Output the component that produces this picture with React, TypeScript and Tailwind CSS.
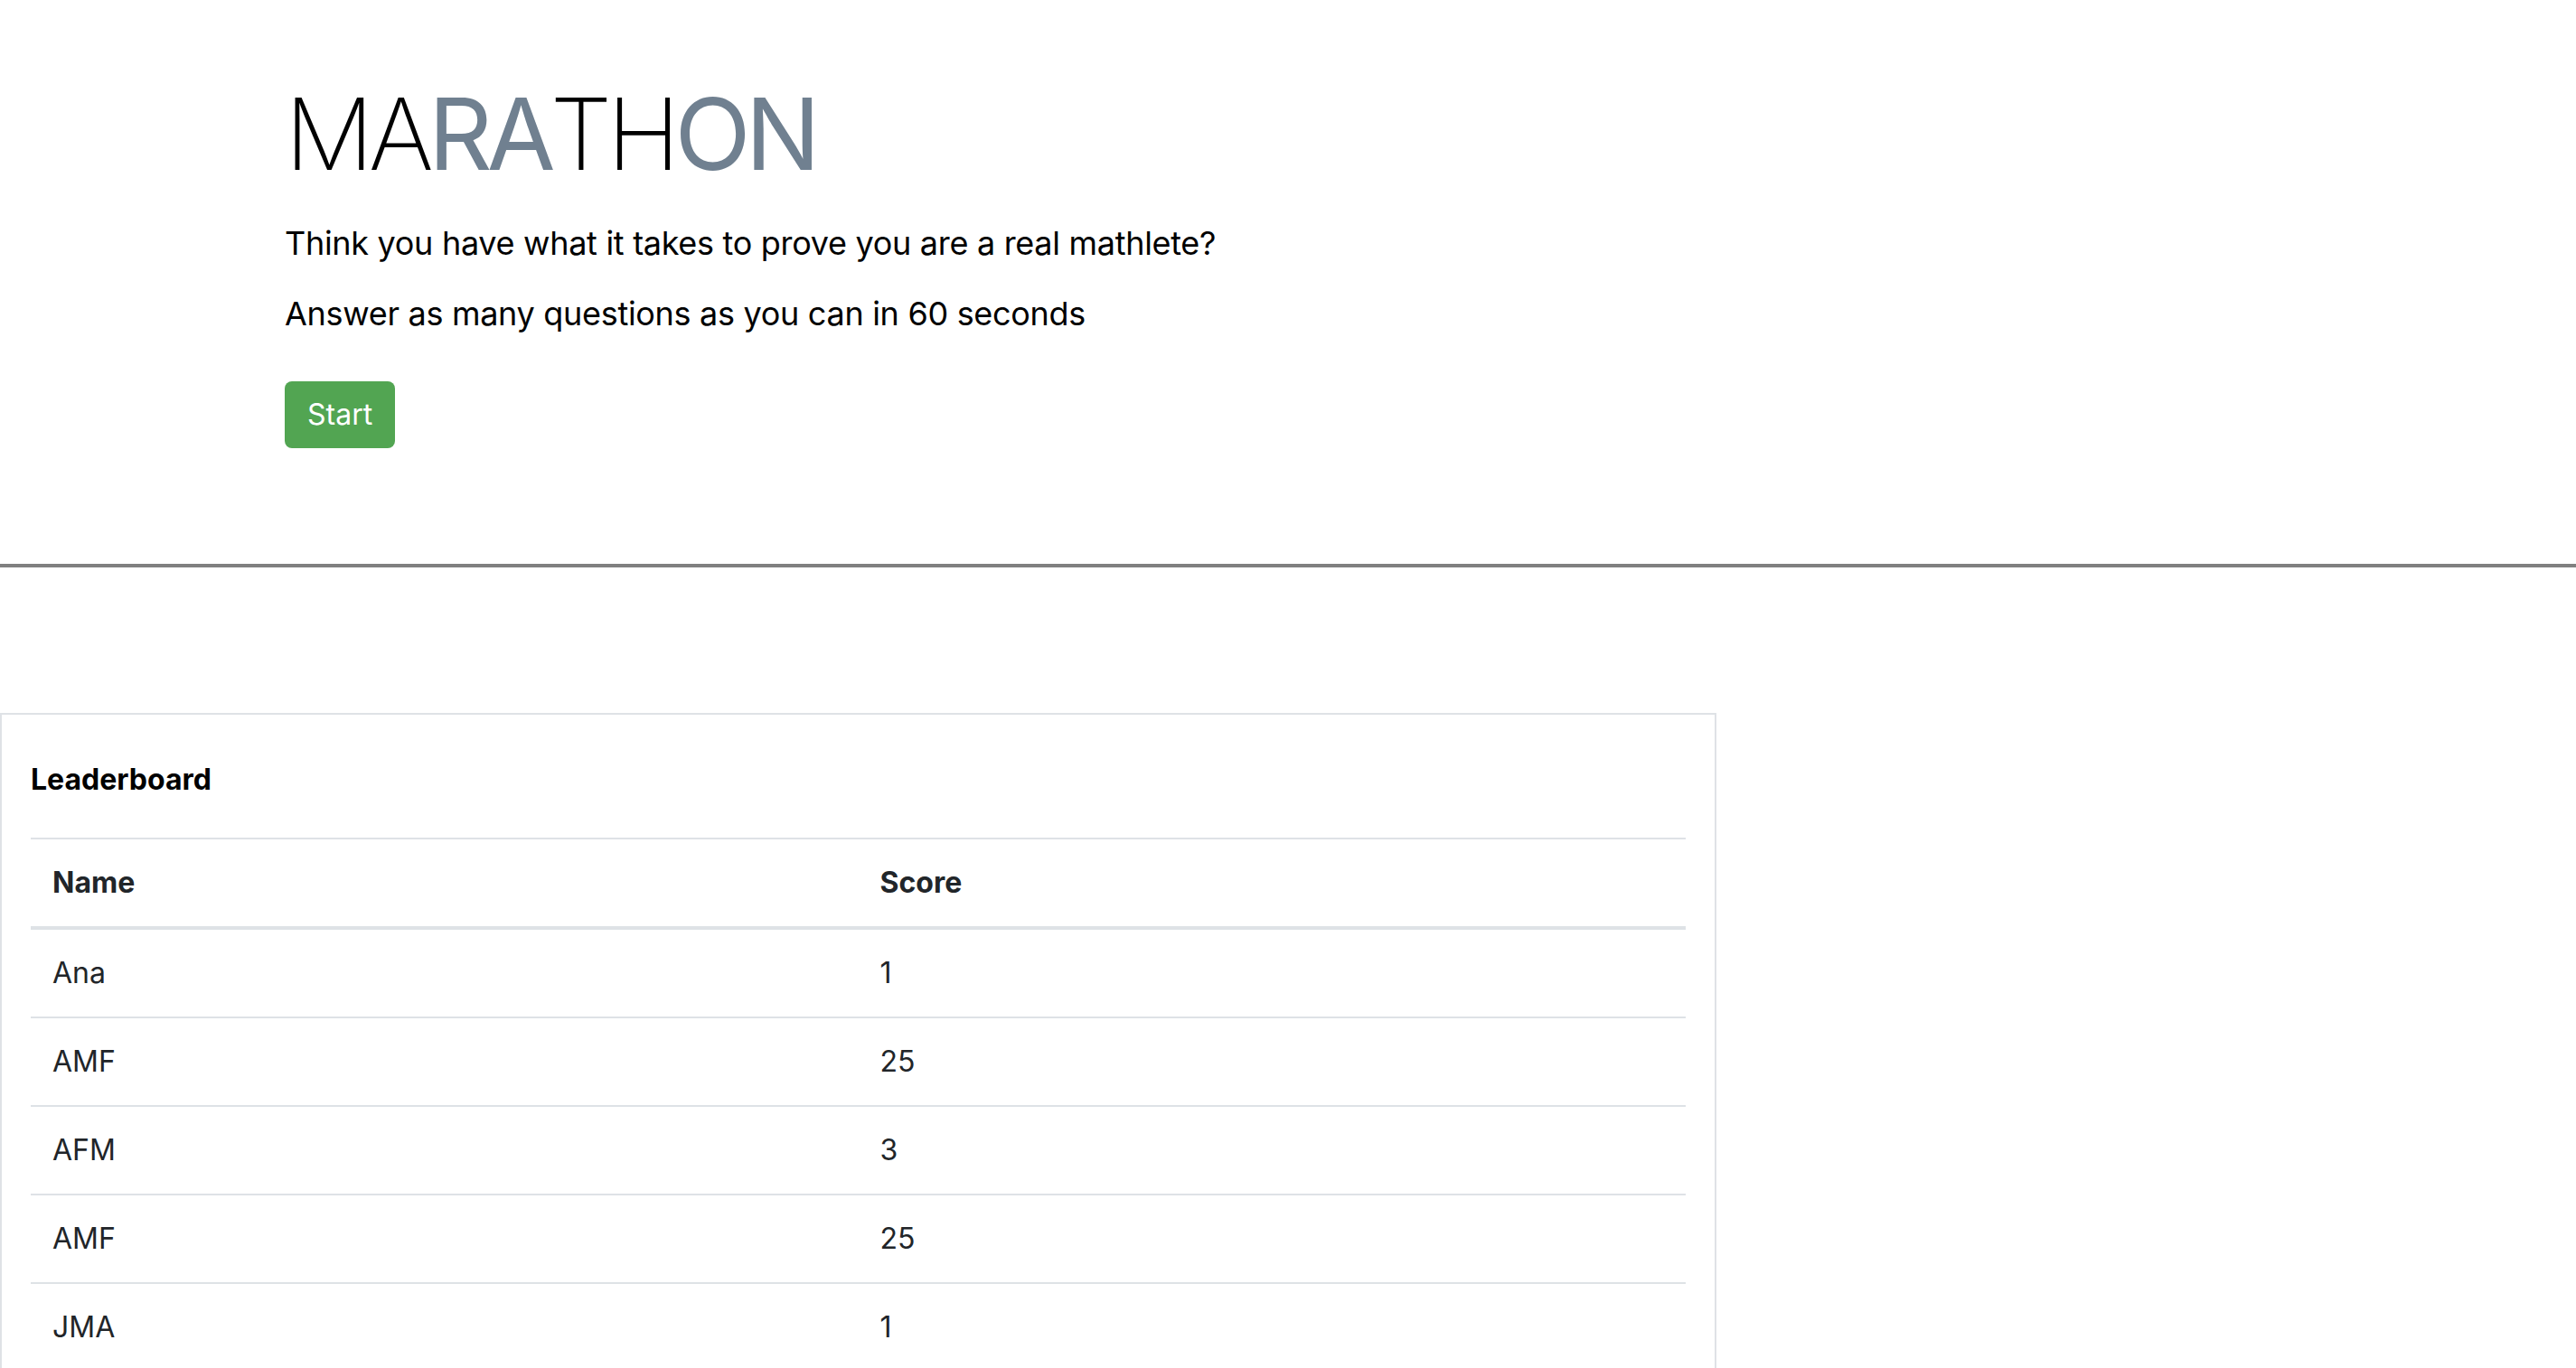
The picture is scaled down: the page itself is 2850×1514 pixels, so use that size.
import React from 'react';

const scores = [
  { name: 'Ana', score: 1 },
  { name: 'AMF', score: 25 },
  { name: 'AFM', score: 3 },
  { name: 'AMF', score: 25 },
  { name: 'JMA', score: 1 },
];

export default function App() {
  return (
    <div className="min-h-screen bg-white text-black" style={{ fontFamily: 'Inter, "Noto Sans", sans-serif' }}>
      <div className="pl-[315px] pt-[82px] pb-[128px]">
        <h1 className="text-[110px] leading-[1.2] tracking-[-6px] font-extralight">
          MA<span className="font-normal text-[#708090]">RA</span>TH<span className="font-normal text-[#708090]">ON</span>
        </h1>
        <p className="mt-[31px] text-[36px] leading-[48px] tracking-[-0.3px]">
          Think you have what it takes to prove you are a real mathlete?
        </p>
        <p className="mt-[30px] text-[36px] leading-[48px] tracking-[-0.3px]">
          Answer as many questions as you can in 60 seconds
        </p>
        <button className="mt-[51px] bg-[#52a552] text-white text-[32px] leading-[48px] px-[25px] py-[13px] rounded-[8px]">
          Start
        </button>
      </div>

      <hr className="border-0 h-[4px] bg-[#808080]" />

      <div className="mt-[161px] w-[1899px] border-2 border-[#dfe2e6] px-[32px] pt-[50px] text-[#212529]">
        <h5 className="text-[32px] leading-[44px] font-bold text-black mb-[42px]">Leaderboard</h5>
        <table className="w-full text-[32px] leading-[48px]">
          <thead>
            <tr className="border-t-2 border-[#dee2e6]">
              <th className="w-1/2 text-left font-bold px-[24px] py-[24px] border-b-4 border-[#dee2e6]">Name</th>
              <th className="text-left font-bold px-[24px] py-[24px] border-b-4 border-[#dee2e6]">Score</th>
            </tr>
          </thead>
          <tbody>
            {scores.map((row, i) => (
              <tr key={i} className="border-t-2 border-[#dee2e6]">
                <td className="px-[24px] py-[24px]">{row.name}</td>
                <td className="px-[24px] py-[24px]">{row.score}</td>
              </tr>
            ))}
          </tbody>
        </table>
      </div>
    </div>
  );
}
